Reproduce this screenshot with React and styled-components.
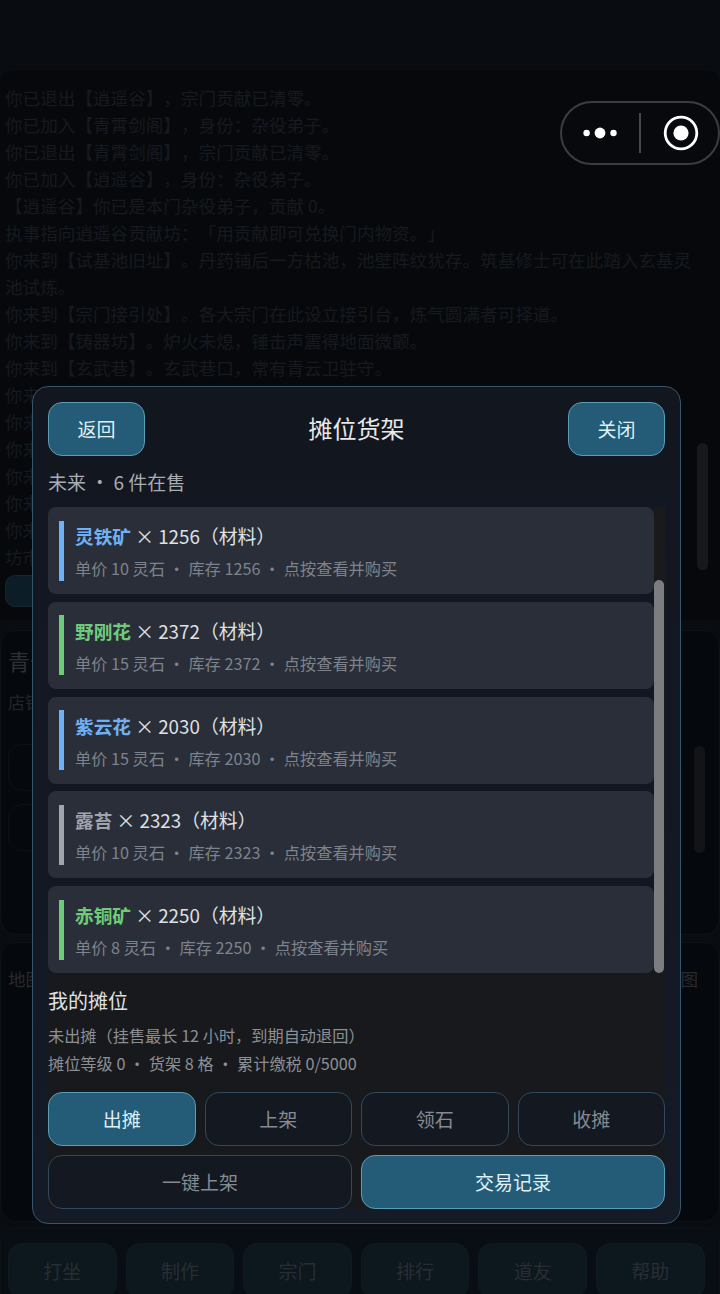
import React from 'react'
import styled, { createGlobalStyle } from 'styled-components'

const logLines = [
  '你已退出【逍遥谷】，宗门贡献已清零。',
  '你已加入【青霄剑阁】，身份：杂役弟子。',
  '你已退出【青霄剑阁】，宗门贡献已清零。',
  '你已加入【逍遥谷】，身份：杂役弟子。',
  '【逍遥谷】你已是本门杂役弟子，贡献 0。',
  '执事指向逍遥谷贡献坊：「用贡献即可兑换门内物资。」',
  '你来到【试基池旧址】。丹药铺后一方枯池，池壁阵纹犹存。筑基修士可在此踏入玄基灵池试炼。',
  '你来到【宗门接引处】。各大宗门在此设立接引台，炼气圆满者可择道。',
  '你来到【铸器坊】。炉火未熄，锤击声震得地面微颤。',
  '你来到【玄武巷】。玄武巷口，常有青云卫驻守。',
  '你来到【青云坊】。',
  '你来到【丹药铺】。',
  '你来到【百草堂】。',
  '你来到【聚宝阁】。',
  '你来到【藏经楼】。',
  '你来到【坊市】。',
  '坊市',
]

const goods = [
  { name: '灵铁矿', count: 1256, price: 10, tint: '#6fb1f5' },
  { name: '野刚花', count: 2372, price: 15, tint: '#6ecb7a' },
  { name: '紫云花', count: 2030, price: 15, tint: '#6fb1f5' },
  { name: '露苔', count: 2323, price: 10, tint: '#a2a4ab' },
  { name: '赤铜矿', count: 2250, price: 8, tint: '#6ecb7a' },
]

const navItems = ['打坐', '制作', '宗门', '排行', '道友', '帮助']

const App = () => {
  return (
    <Page>
      <GlobalStyle />
      <TopBar />
      <LogPanel>
        {logLines.map((line, i) => (
          <LogLine key={i}>{line}</LogLine>
        ))}
        <LogButton />
        <LogThumb />
      </LogPanel>
      <ShopPanel>
        <ShopTitle>青云坊市</ShopTitle>
        <ShopNote>店铺列表</ShopNote>
        <ShopSlots>
          <ShopSlot />
          <ShopSlot />
        </ShopSlots>
        <ShopThumb />
      </ShopPanel>
      <MapPanel>
        <span>地图</span>
        <span>地图</span>
      </MapPanel>
      <BottomNav>
        {navItems.map((item) => (
          <NavButton key={item}>{item}</NavButton>
        ))}
      </BottomNav>

      <Overlay>
        <Dialog>
          <DialogHead>
            <HeadButton $primary>返回</HeadButton>
            <DialogTitle>摊位货架</DialogTitle>
            <HeadButton $primary>关闭</HeadButton>
          </DialogHead>
          <Subtitle>未来 · 6 件在售</Subtitle>
          <GoodsArea>
            <GoodsList>
              {goods.map((g) => (
                <GoodsRow key={g.name}>
                  <Rarity $tint={g.tint} />
                  <div>
                    <GoodsName>
                      <Tinted $tint={g.tint}>{g.name}</Tinted> × {g.count}（材料）
                    </GoodsName>
                    <GoodsMeta>
                      单价 {g.price} 灵石 · 库存 {g.count} · 点按查看并购买
                    </GoodsMeta>
                  </div>
                </GoodsRow>
              ))}
            </GoodsList>
            <Track>
              <Thumb />
            </Track>
          </GoodsArea>
          <StallSection>
            <SectionTitle>我的摊位</SectionTitle>
            <InfoLine>未出摊（挂售最长 12 小时，到期自动退回）</InfoLine>
            <InfoLine>摊位等级 0 · 货架 8 格 · 累计缴税 0/5000</InfoLine>
            <Actions>
              <Button $primary>出摊</Button>
              <Button>上架</Button>
              <Button>领石</Button>
              <Button>收摊</Button>
              <WideButton>一键上架</WideButton>
              <WideButton $primary>交易记录</WideButton>
            </Actions>
          </StallSection>
        </Dialog>
      </Overlay>

      <Capsule>
        <svg width="56" height="20" viewBox="0 0 56 20">
          <circle cx="12.6" cy="10" r="3.2" fill="#fff" />
          <circle cx="26" cy="10" r="5.4" fill="#fff" />
          <circle cx="39.5" cy="10" r="3.2" fill="#fff" />
        </svg>
        <CapsuleLine />
        <svg width="38" height="38" viewBox="0 0 38 38">
          <circle cx="19" cy="19" r="15.8" fill="none" stroke="#fff" strokeWidth="2.8" />
          <circle cx="19" cy="19" r="7.6" fill="#fff" />
        </svg>
      </Capsule>
    </Page>
  )
}

export default App

const GlobalStyle = createGlobalStyle`
  html, body {
    margin: 0;
    padding: 0;
    background: #192334;
  }
  * {
    box-sizing: border-box;
  }
`

const Page = styled.div`
  position: relative;
  display: flex;
  flex-direction: column;
  width: 720px;
  height: 1294px;
  overflow: hidden;
  background: #182230;
  color: #3b4351;
  font-family: "Noto Sans CJK SC", "Noto Sans", sans-serif;
  text-spacing-trim: space-all;
`

const TopBar = styled.div`
  flex: 0 0 70px;
`

const LogPanel = styled.div`
  position: relative;
  flex: 0 0 550px;
  padding: 14px 22px 0 5px;
  background: #10171f;
  border-radius: 14px 14px 0 0;
  font-size: 17.6px;
  line-height: 27px;
  overflow: hidden;
`

const LogLine = styled.div``

const LogButton = styled.div`
  width: 120px;
  height: 32px;
  margin-top: 5px;
  background: #234d66;
  border: 1px solid #336680;
  border-radius: 10px;
`

const LogThumb = styled.div`
  position: absolute;
  top: 373px;
  right: 12px;
  width: 11px;
  height: 127px;
  border-radius: 6px;
  background: #3d4148;
`

const ShopPanel = styled.div`
  position: relative;
  flex: 0 0 305px;
  margin-top: 10px;
  padding: 12px 7px;
  background: #0e1722;
  border: 1px solid #22303e;
  border-radius: 16px;
`

const ShopTitle = styled.div`
  font-size: 22px;
  line-height: 34px;
  color: #7a7e86;
`

const ShopNote = styled.div`
  margin-top: 11px;
  font-size: 17px;
  line-height: 28px;
  color: #5c6068;
`

const ShopSlots = styled.div`
  display: flex;
  flex-direction: column;
  gap: 13px;
  margin-top: 28px;
`

const ShopSlot = styled.div`
  width: 200px;
  height: 47px;
  border: 1px solid #1f2b38;
  border-radius: 14px;
`

const ShopThumb = styled.div`
  position: absolute;
  top: 115px;
  right: 14px;
  width: 11px;
  height: 107px;
  border-radius: 6px;
  background: #33363f;
`

const MapPanel = styled.div`
  display: flex;
  justify-content: space-between;
  flex: 0 0 280px;
  margin-top: 7px;
  padding: 22px 21px 0 7px;
  background: #0e1722;
  border: 1px solid #22303e;
  border-radius: 16px;
  font-size: 17.6px;
  line-height: 28px;
  color: #6a6d75;
`

const BottomNav = styled.div`
  display: grid;
  grid-template-columns: repeat(6, 108.6px);
  gap: 9px;
  flex: 0 0 90px;
  margin-top: 5px;
  padding: 15px 7px;
  background: #1a2537;
  border: 1px solid #22303e;
  border-radius: 16px;
`

const NavButton = styled.div`
  display: flex;
  align-items: center;
  justify-content: center;
  height: 55px;
  padding-bottom: 1px;
  font-size: 19px;
  color: #6a7885;
  background: #243d50;
  border: 1px solid #2c4557;
  border-radius: 14px;
`

const Overlay = styled.div`
  position: absolute;
  inset: 0;
  padding: 386px 39px 70px 32px;
  background: rgba(0, 0, 0, 0.62);
`

const Dialog = styled.div`
  display: flex;
  flex-direction: column;
  height: 100%;
  padding: 15px;
  background: linear-gradient(180deg, #12161f 0%, #141b26 100%);
  border: 1px solid #35566c;
  border-radius: 16px;
`

const DialogHead = styled.div`
  display: flex;
  align-items: center;
  justify-content: space-between;
  flex: 0 0 54px;
`

const DialogTitle = styled.div`
  padding-bottom: 3px;
  font-size: 24px;
  color: #e6e8ea;
`

const Subtitle = styled.div`
  margin-top: 12px;
  font-size: 19px;
  line-height: 27px;
  color: #a8adb3;
`

const GoodsArea = styled.div`
  display: flex;
  margin-top: 12px;
`

const GoodsList = styled.div`
  display: flex;
  flex-direction: column;
  gap: 7.75px;
  flex: 1;
  background: #131722;
`

const GoodsRow = styled.div`
  display: flex;
  align-items: center;
  gap: 11px;
  height: 87px;
  padding: 0 11px;
  background: #2a2e38;
  border-radius: 8px;
`

const Rarity = styled.div`
  flex: 0 0 5px;
  height: 60px;
  background: ${(p) => p.$tint};
`

const GoodsName = styled.div`
  font-size: 18.8px;
  line-height: 30px;
  color: #dfe1e4;
`

const Tinted = styled.span`
  font-weight: 700;
  font-size: 18.67px;
  color: ${(p) => p.$tint};
`

const GoodsMeta = styled.div`
  margin-top: 5px;
  font-size: 16.2px;
  line-height: 24px;
  color: #7d838c;
`

const Track = styled.div`
  display: flex;
  align-items: flex-end;
  flex: 0 0 11px;
  background: #1a1a1c;
`

const Thumb = styled.div`
  width: 10px;
  height: 393px;
  background: #7c7d81;
  border-radius: 5px;
`

const StallSection = styled.div`
  display: flex;
  flex-direction: column;
  flex: 1;
  background: #18191c;
`

const SectionTitle = styled.div`
  margin-top: 14px;
  font-size: 20px;
  line-height: 28px;
  color: #dfe1e3;
`

const InfoLine = styled.div`
  margin-top: 8px;
  font-size: 16.2px;
  line-height: 24px;
  color: #8b9097;

  & + & {
    margin-top: 4px;
  }
`

const Actions = styled.div`
  display: grid;
  grid-template-columns: repeat(4, 1fr);
  gap: 9px;
  margin-top: 17px;
`

const Button = styled.div`
  display: flex;
  align-items: center;
  justify-content: center;
  height: 54px;
  padding-bottom: 1px;
  font-size: 19px;
  color: ${(p) => (p.$primary ? '#dff0f6' : '#858b92')};
  background: ${(p) => (p.$primary ? '#245b76' : '#141821')};
  border: 1px solid ${(p) => (p.$primary ? '#5c9db6' : '#33495a')};
  border-radius: 14px;
`

const HeadButton = styled(Button)`
  width: 97px;
`

const WideButton = styled(Button)`
  grid-column: span 2;
`

const Capsule = styled.div`
  position: absolute;
  top: 101px;
  left: 560px;
  display: flex;
  align-items: center;
  width: 160px;
  height: 64px;
  padding-left: 12px;
  background: #07090d;
  border: 2px solid #3c3d41;
  border-radius: 32px;

  svg {
    flex: none;
  }

  svg:last-child {
    margin-left: 21px;
  }
`

const CapsuleLine = styled.div`
  flex: none;
  width: 2px;
  height: 40px;
  margin-left: 9px;
  background: #47484b;
`
